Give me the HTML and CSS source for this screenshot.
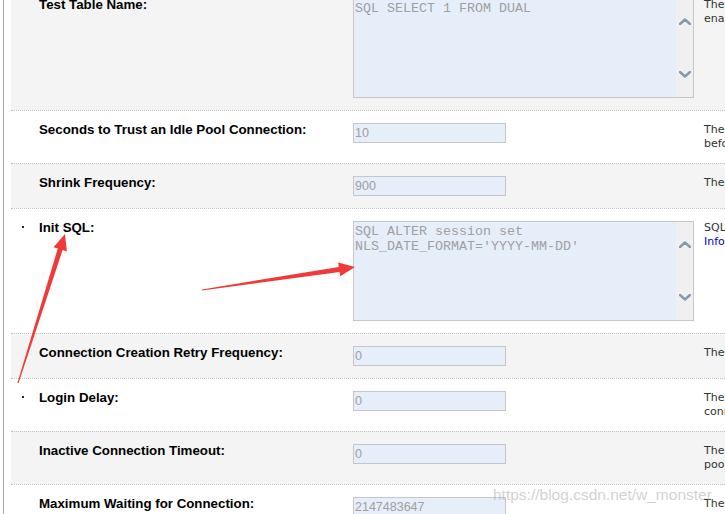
FILE: index.html
```html
<!DOCTYPE html>
<html lang="en">
<head>
<meta charset="utf-8">
<title>JDBC Connection Pool</title>
<link rel="stylesheet" href="styles.css">
</head>
<body>
<div class="frame">
  <div class="row gray">
    <div class="mark"></div>
    <div class="label">Test Table Name:</div>
    <div class="field">
      <div class="ta">
        <div class="ta-text">SQL SELECT 1 FROM DUAL</div>
        <div class="sb">
          <svg width="12" height="7" viewBox="0 0 12 7"><polyline points="1,6 6,1.5 11,6" /></svg>
          <svg width="12" height="7" viewBox="0 0 12 7"><polyline points="1,1 6,5.5 11,1" /></svg>
        </div>
      </div>
    </div>
    <div class="desc"><div>The name of the database table to use when testing physical database connections. This name is required when you specify a Test Frequency and</div><div>enable Test Reserved Connections.</div></div>
  </div>

  <div class="row">
    <div class="mark"></div>
    <div class="label">Seconds to Trust an Idle Pool Connection:</div>
    <div class="field"><div class="inp">10</div></div>
    <div class="desc"><div>The number of seconds within a connection use that WebLogic Server trusts that the connection is still viable and will skip the connection test,</div><div>before delivering it to an application or during the periodic connection testing process.</div></div>
  </div>

  <div class="row gray">
    <div class="mark"></div>
    <div class="label">Shrink Frequency:</div>
    <div class="field"><div class="inp">900</div></div>
    <div class="desc"><div>The number of seconds to wait before shrinking a connection pool that has incrementally increased to meet demand.</div></div>
  </div>

  <div class="row">
    <div class="mark"><span class="dot"></span></div>
    <div class="label">Init SQL:</div>
    <div class="field">
      <div class="ta">
        <div class="ta-text">SQL ALTER session set<br>NLS_DATE_FORMAT='YYYY-MM-DD'</div>
        <div class="sb">
          <svg width="12" height="7" viewBox="0 0 12 7"><polyline points="1,6 6,1.5 11,6" /></svg>
          <svg width="12" height="7" viewBox="0 0 12 7"><polyline points="1,1 6,5.5 11,1" /></svg>
        </div>
      </div>
    </div>
    <div class="desc"><div>SQL statement to execute that will initialize newly created physical database connections. Start the statement with SQL followed by a space.</div><div><a class="link" href="#">Info...</a></div></div>
  </div>

  <div class="row gray">
    <div class="mark"></div>
    <div class="label">Connection Creation Retry Frequency:</div>
    <div class="field"><div class="inp">0</div></div>
    <div class="desc"><div>The number of seconds between attempts to establish connections to the database.</div></div>
  </div>

  <div class="row">
    <div class="mark"><span class="dot"></span></div>
    <div class="label">Login Delay:</div>
    <div class="field"><div class="inp">0</div></div>
    <div class="desc"><div>The number of seconds to delay before creating each physical database connection. This delay supports database servers that cannot handle</div><div>connection requests in rapid succession.</div></div>
  </div>

  <div class="row gray">
    <div class="mark"></div>
    <div class="label">Inactive Connection Timeout:</div>
    <div class="field"><div class="inp">0</div></div>
    <div class="desc"><div>The number of inactive seconds on a reserved connection before WebLogic Server reclaims the connection and releases it back into the connection</div><div>pool.</div></div>
  </div>

  <div class="row">
    <div class="mark"></div>
    <div class="label">Maximum Waiting for Connection:</div>
    <div class="field"><div class="inp">2147483647</div></div>
    <div class="desc"><div>The maximum number of connection requests that can concurrently block threads while waiting to reserve a connection from the data source's pool.</div></div>
  </div>
</div>

<svg class="arrows" width="725" height="514" viewBox="0 0 725 514">
  <polygon points="18.6,383 62.6,250.1 66.9,251.4 65,234 53.5,247.2 57.8,248.5 17.4,383" />
  <polygon points="202,290.6 339.6,271.9 340.2,276.3 355,267 338.2,262.5 338.8,266.9 202,289.4" />
</svg>

<div class="watermark">https://blog.csdn.net/w_monster</div>
</body>
</html>
```

FILE: styles.css
```css
html, body {
  margin: 0;
  padding: 0;
  overflow: hidden;
  background: #ffffff;
}

body {
  width: 725px;
  height: 514px;
  position: relative;
}

.frame {
  margin-top: -15px;
  margin-left: 3px;
  border-left: 1px solid #a8a8a8;
  padding-left: 7px;
  width: 1500px;
  height: 560px;
}

.row {
  display: grid;
  grid-template-columns: 28px 314px 351px 1fr;
  border-top: 1px dotted #c4c4c4;
  padding: 12px 0 8px;
  background: #ffffff;
}

.row.gray {
  background: #f4f4f4;
}

.mark {
  padding-left: 11px;
}

.dot {
  display: block;
  width: 2px;
  height: 2px;
  margin-top: 5px;
  background: #222;
}

.label {
  font-family: "Liberation Sans", Arial, sans-serif;
  font-weight: bold;
  font-size: 13.3px;
  line-height: 13px;
  color: #000;
}

.field {
  padding-bottom: 4px;
}

.inp {
  width: 153px;
  height: 20px;
  box-sizing: border-box;
  border: 1px solid #c6c6c6;
  background: #e6eefa;
  font-family: "Liberation Sans", Arial, sans-serif;
  font-size: 12.5px;
  line-height: 18px;
  color: #a0a0a0;
  padding-left: 1px;
}

.ta {
  width: 341px;
  height: 100px;
  box-sizing: border-box;
  border: 1px solid #c6c6c6;
  background: #e6eefa;
  display: flex;
}

.ta-text {
  flex: 1;
  padding: 2px 1px;
  font-family: "Liberation Mono", "Courier New", monospace;
  font-size: 13.33px;
  line-height: 15px;
  color: #a0a0a0;
  white-space: nowrap;
  overflow: hidden;
}

.sb {
  width: 17px;
  background: #f0f0f0;
  display: flex;
  flex-direction: column;
  justify-content: space-between;
  align-items: center;
  padding: 19px 0;
}

.sb svg polyline {
  fill: none;
  stroke: #8499ad;
  stroke-width: 2.4;
  stroke-linecap: round;
  stroke-linejoin: round;
}

.desc {
  font-family: "DejaVu Sans", Verdana, sans-serif;
  font-size: 11px;
  line-height: 14px;
  color: #333;
  white-space: nowrap;
  padding-bottom: 4px;
}

.link {
  color: #0000cc;
  text-decoration: none;
}

.arrows {
  position: absolute;
  top: 0;
  left: 0;
  pointer-events: none;
}

.arrows polygon {
  fill: #f03a3a;
}

.watermark {
  position: absolute;
  left: 493px;
  top: 486px;
  font-family: "Liberation Sans", Arial, sans-serif;
  font-size: 15.5px;
  line-height: 18px;
  color: rgba(170, 170, 170, 0.55);
  white-space: nowrap;
  pointer-events: none;
}
```
